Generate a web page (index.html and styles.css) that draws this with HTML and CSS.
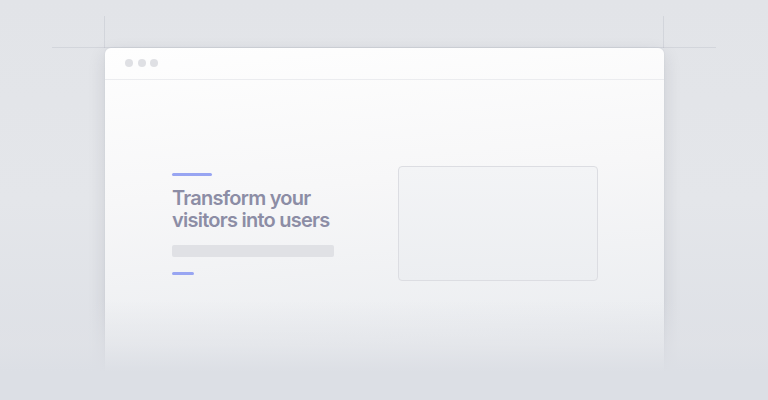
FILE: index.html
```html
<!DOCTYPE html>
<html lang="en">
<head>
<meta charset="utf-8">
<title>Transform your visitors into users</title>
<link rel="stylesheet" href="styles.css">
</head>
<body>
<div class="stage">
  <span class="guide guide-h"></span>
  <span class="guide guide-vl"></span>
  <span class="guide guide-vr"></span>
  <div class="window">
    <div class="titlebar">
      <span class="dot"></span><span class="dot"></span><span class="dot"></span>
    </div>
    <div class="content">
      <div class="hero">
        <span class="accent"></span>
        <h1 class="title">Transform your<br>visitors into users</h1>
        <span class="line"></span>
        <span class="accent accent-sm"></span>
      </div>
      <div class="media"></div>
    </div>
  </div>
  <div class="fade"></div>
</div>
</body>
</html>
```
FILE: styles.css
```css
* { box-sizing: border-box; }
html, body { margin: 0; height: 100%; }
body {
  background: linear-gradient(180deg, #e2e4e8 0%, #e4e6ea 50%, #dcdfe5 100%);
  font-family: Inter, "Noto Sans", sans-serif;
  overflow: hidden;
}
.stage {
  position: relative;
  height: 400px;
  padding: 48px 0 0 105px;
}
.guide { position: absolute; background: rgba(150,155,170,0.2); }
.guide-h { left: 52px; width: 664px; top: 47px; height: 1px; }
.guide-vl { left: 104px; top: 16px; width: 1px; height: 32px; }
.guide-vr { left: 663px; top: 16px; width: 1px; height: 32px; }
.window {
  width: 559px;
  height: 340px;
  background: linear-gradient(175deg, #fefefe 0%, #f7f7f8 40%, #eceef1 80%, #e6e8ec 100%);
  border-radius: 6px 6px 0 0;
  box-shadow: 0 6px 18px rgba(40,45,60,0.12), 0 0 2px rgba(40,45,60,0.08);
  display: flex;
  flex-direction: column;
}
.titlebar {
  height: 32px;
  border-bottom: 1px solid #ebecef;
  display: flex;
  align-items: center;
  gap: 4.5px;
  padding: 0 0 2px 20px;
}
.dot { width: 8px; height: 8px; border-radius: 50%; background: #dfe0e4; }
.content {
  display: flex;
  justify-content: space-between;
  align-items: center;
  padding: 86px 66px 0 67px;
}
.hero { display: flex; flex-direction: column; align-items: flex-start; }
.accent { display: block; width: 40px; height: 3px; border-radius: 2px; background: #98a5f2; }
.accent-sm { width: 22px; }
.title {
  margin: 11px 0 14px;
  font-size: 20px;
  line-height: 22px;
  font-weight: 600;
  letter-spacing: -0.75px;
  color: #8c8da5;
}
.line { display: block; width: 162px; height: 12px; border-radius: 2px; background: #e0e1e5; margin-bottom: 15px; }
.media {
  width: 200px;
  height: 115px;
  border: 1px solid #dcdde2;
  border-radius: 4px;
  background: linear-gradient(180deg, #f3f4f6, #eceef1);
}
.fade {
  position: absolute;
  left: 0; right: 0; top: 300px; height: 100px;
  background: linear-gradient(180deg, rgba(224,226,231,0) 0%, rgba(224,226,231,0.6) 45%, #dcdfe5 72%, #dcdfe5 100%);
}
```
